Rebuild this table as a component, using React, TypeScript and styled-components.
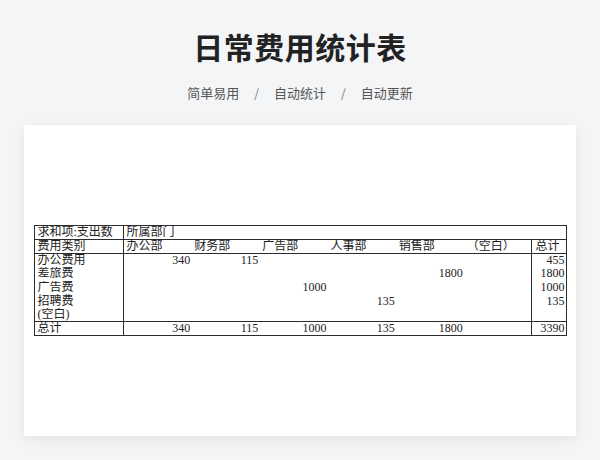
import React from "react";
import styled, { createGlobalStyle } from "styled-components";

const GlobalStyle = createGlobalStyle`
  html, body {
    margin: 0;
    padding: 0;
    background: #f4f5f7;
  }
  body {
    font-family: "Noto Sans CJK SC", "Noto Sans", sans-serif;
  }
`;

const Page = styled.div`
  width: 600px;
  height: 460px;
  display: flex;
  flex-direction: column;
  align-items: center;
  background: #f4f5f7;
  overflow: hidden;
`;

const Title = styled.h1`
  margin: 28px 0 0;
  font-size: 30px;
  line-height: 36px;
  font-weight: 700;
  color: #222;
  letter-spacing: 0.5px;
`;

const Tags = styled.div`
  margin-top: 20px;
  display: flex;
  align-items: center;
  gap: 15px;
  font-size: 13px;
  line-height: 18px;
  color: #555;
`;

const Sep = styled.span`
  color: #777;
  font-size: 12px;
`;

const Card = styled.div`
  margin-top: 23px;
  width: 552px;
  height: 311px;
  background: #fff;
  box-shadow: 0 3px 12px rgba(0, 0, 0, 0.08);
  display: flex;
  align-items: center;
  justify-content: center;
`;

const Sheet = styled.table`
  width: 532px;
  table-layout: fixed;
  border-collapse: collapse;
  border: 1px solid #2b2b2b;
  font-family: "Liberation Serif", "Noto Sans CJK SC", serif;
  font-size: 12px;
  color: #222;
`;

const Row = styled.tr<{ $top?: boolean; $h?: number }>`
  height: ${(p) => p.$h ?? 14}px;
  ${(p) => (p.$top ? "border-top: 1px solid #2b2b2b;" : "")}
`;

const Cell = styled.td<{ $align?: "left" | "right"; $right?: boolean; $left?: boolean }>`
  padding: 0 ${(p) => (p.$align === "right" ? "1px" : "0")} 0
    ${(p) => (p.$align === "right" ? "0" : "3px")};
  text-align: ${(p) => p.$align ?? "left"};
  line-height: 13px;
  white-space: nowrap;
  overflow: hidden;
  vertical-align: middle;
  ${(p) => (p.$right ? "border-right: 1px solid #2b2b2b;" : "")}
  ${(p) => (p.$left ? "border-left: 1px solid #2b2b2b;" : "")}
`;

const depts = ["办公部", "财务部", "广告部", "人事部", "销售部", "（空白）"];

const rows: { label: string; vals: (number | null)[]; total: number | null }[] = [
  { label: "办公费用", vals: [340, 115, null, null, null, null], total: 455 },
  { label: "差旅费", vals: [null, null, null, null, 1800, null], total: 1800 },
  { label: "广告费", vals: [null, null, 1000, null, null, null], total: 1000 },
  { label: "招聘费", vals: [null, null, null, 135, null, null], total: 135 },
  { label: "(空白)", vals: [null, null, null, null, null, null], total: null },
];

const totals = [340, 115, 1000, 135, 1800, null];

export default function App() {
  return (
    <>
      <GlobalStyle />
      <Page>
        <Title>日常费用统计表</Title>
        <Tags>
          <span>简单易用</span>
          <Sep>/</Sep>
          <span>自动统计</span>
          <Sep>/</Sep>
          <span>自动更新</span>
        </Tags>
        <Card>
          <Sheet>
            <colgroup>
              <col style={{ width: 89 }} />
              {depts.map((d) => (
                <col key={d} style={{ width: 68.17 }} />
              ))}
              <col style={{ width: 34 }} />
            </colgroup>
            <tbody>
              <Row>
                <Cell $right>求和项:支出数</Cell>
                <Cell colSpan={7}>所属部门</Cell>
              </Row>
              <Row $top>
                <Cell $right>费用类别</Cell>
                {depts.map((d) => (
                  <Cell key={d}>{d}</Cell>
                ))}
                <Cell $left>总计</Cell>
              </Row>
              {rows.map((r, i) => (
                <Row key={r.label} $top={i === 0} $h={13.6}>
                  <Cell $right>{r.label}</Cell>
                  {r.vals.map((v, j) => (
                    <Cell key={j} $align="right">
                      {v ?? ""}
                    </Cell>
                  ))}
                  <Cell $left $align="right">
                    {r.total ?? ""}
                  </Cell>
                </Row>
              ))}
              <Row $top>
                <Cell $right>总计</Cell>
                {totals.map((v, j) => (
                  <Cell key={j} $align="right">
                    {v ?? ""}
                  </Cell>
                ))}
                <Cell $left $align="right">
                  3390
                </Cell>
              </Row>
            </tbody>
          </Sheet>
        </Card>
      </Page>
    </>
  );
}
